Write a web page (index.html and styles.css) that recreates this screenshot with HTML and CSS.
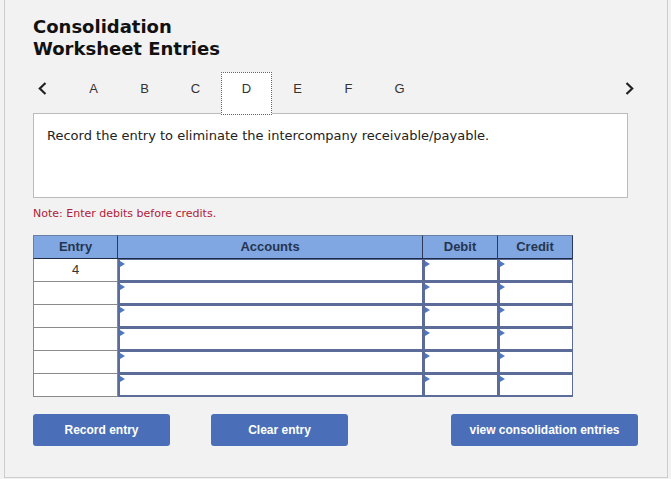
FILE: index.html
```html
<!DOCTYPE html>
<html>
<head>
<meta charset="utf-8">
<link rel="stylesheet" href="styles.css">
</head>
<body>
<div class="frame">
  <h1 class="title">Consolidation<br>Worksheet Entries</h1>

  <div class="nav">
    <div class="chev prev">
      <svg width="9" height="13" viewBox="0 0 9 13"><polyline points="7.5,1 1.8,6.5 7.5,12" fill="none" stroke="#222" stroke-width="2.2"/></svg>
    </div>
    <div class="tab">A</div>
    <div class="tab">B</div>
    <div class="tab">C</div>
    <div class="tab active">D</div>
    <div class="tab">E</div>
    <div class="tab">F</div>
    <div class="tab">G</div>
    <div class="chev next">
      <svg width="9" height="13" viewBox="0 0 9 13"><polyline points="1.5,1 7.2,6.5 1.5,12" fill="none" stroke="#222" stroke-width="2.2"/></svg>
    </div>
  </div>

  <div class="question">Record the entry to eliminate the intercompany receivable/payable.</div>

  <p class="note">Note: Enter debits before credits.</p>

  <div class="grid">
    <div class="hd first">Entry</div>
    <div class="hd">Accounts</div>
    <div class="hd">Debit</div>
    <div class="hd">Credit</div>

    <div class="entry">4</div><div class="inp"></div><div class="inp"></div><div class="inp"></div>
    <div class="entry"></div><div class="inp"></div><div class="inp"></div><div class="inp"></div>
    <div class="entry"></div><div class="inp"></div><div class="inp"></div><div class="inp"></div>
    <div class="entry"></div><div class="inp"></div><div class="inp"></div><div class="inp"></div>
    <div class="entry"></div><div class="inp"></div><div class="inp"></div><div class="inp"></div>
    <div class="entry"></div><div class="inp"></div><div class="inp"></div><div class="inp"></div>
  </div>

  <div class="buttons">
    <button class="btn">Record entry</button>
    <button class="btn clear">Clear entry</button>
    <button class="btn view">view consolidation entries</button>
  </div>
</div>
</body>
</html>
```

FILE: styles.css
```css
html, body {
  margin: 0;
  padding: 0;
  background: #f2f2f2;
}

.frame {
  margin-left: 4px;
  width: 664px;
  height: 478px;
  box-sizing: border-box;
  border-left: 1px solid #cdcdcd;
  border-right: 1px solid #cdcdcd;
  border-bottom: 1px solid #cdcdcd;
  padding: 16px 0 0 28px;
}

.title {
  margin: 0;
  font-family: "DejaVu Sans", Verdana, sans-serif;
  font-weight: bold;
  font-size: 18px;
  line-height: 22px;
  color: #111;
}

.nav {
  display: flex;
  width: 605px;
  height: 41px;
  margin-top: 12px;
}

.chev {
  padding-top: 10px;
  box-sizing: border-box;
}

.chev svg {
  display: block;
}

.prev {
  width: 35px;
  padding-left: 5px;
}

.next {
  margin-left: auto;
  margin-right: 4px;
}

.tab {
  width: 51px;
  height: 43px;
  box-sizing: border-box;
  padding-top: 9px;
  text-align: center;
  font-family: "Liberation Sans", Arial, sans-serif;
  font-size: 13px;
  line-height: 15px;
  color: #333;
}

.tab.active {
  border: 1px dotted #4c6298;
  background: #fff;
  padding-top: 8px;
  position: relative;
  z-index: 1;
}

.question {
  width: 595px;
  height: 85px;
  box-sizing: border-box;
  border: 1px solid #bbbbbb;
  background: #fff;
  padding: 14px 13px;
  font-family: "DejaVu Sans", Verdana, sans-serif;
  font-size: 13px;
  line-height: 16px;
  color: #222;
}

.note {
  margin: 9px 0 0 0;
  font-family: "DejaVu Sans", Verdana, sans-serif;
  font-size: 11px;
  line-height: 13px;
  color: #b02139;
}

.grid {
  display: grid;
  grid-template-columns: 85px 305px 75px 75px;
  grid-template-rows: 24px repeat(6, 23px);
  width: 540px;
  margin-top: 15px;
}

.hd {
  box-sizing: border-box;
  background: #80a7e1;
  border-top: 1px solid #6a7fa6;
  border-right: 1px solid #2c3a58;
  border-bottom: 1px solid #1e2a44;
  text-align: center;
  font-family: "Liberation Sans", Arial, sans-serif;
  font-weight: bold;
  font-size: 13px;
  line-height: 22px;
  color: #26354f;
}

.hd.first {
  border-left: 1px solid #6a7fa6;
}

.entry {
  box-sizing: border-box;
  background: #fff;
  border-left: 1px solid #8a8a8a;
  border-right: 1px solid #8a8a8a;
  border-bottom: 1px solid #8a8a8a;
  text-align: center;
  font-family: "Liberation Sans", Arial, sans-serif;
  font-size: 13px;
  line-height: 22px;
  color: #333;
}

.inp {
  position: relative;
  box-sizing: border-box;
  background: #fff;
  border-left: 2px solid #5a6c97;
  border-right: 1px solid #5a6c97;
  border-top: 1px solid #5a6c97;
  border-bottom: 2px solid #5a6c97;
}

.inp::before {
  content: "";
  position: absolute;
  left: 0;
  top: 1px;
  width: 0;
  height: 0;
  border-top: 3px solid transparent;
  border-bottom: 3px solid transparent;
  border-left: 5px solid #4f78c2;
}

.buttons {
  display: flex;
  width: 605px;
  margin-top: 17px;
}

.btn {
  height: 32px;
  width: 137px;
  border: none;
  border-radius: 3px;
  background: #4a6fb8;
  color: #fff;
  font-family: "Liberation Sans", Arial, sans-serif;
  font-weight: bold;
  font-size: 12px;
  padding: 0;
}

.btn.clear {
  margin-left: 41px;
}

.btn.view {
  margin-left: auto;
  width: 187px;
}
```
